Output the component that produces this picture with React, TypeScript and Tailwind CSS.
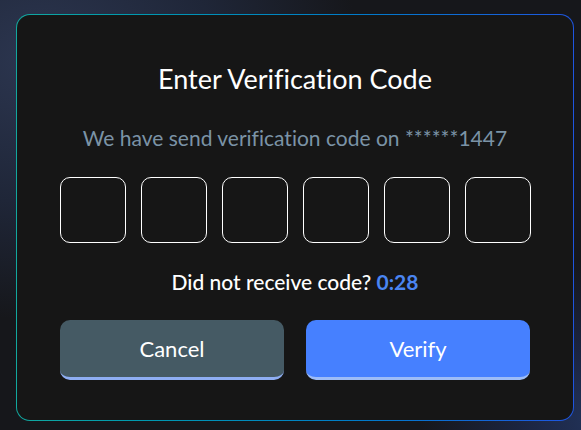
export default function App() {
  return (
    <div
      className="relative h-[430px] w-[581px] overflow-hidden bg-[#16171b] [font-variant-ligatures:none]"
      style={{ fontFamily: 'Lato, "Open Sans", sans-serif' }}
    >
      {/* background glows */}
      <div className="absolute inset-0 bg-[radial-gradient(ellipse_320px_260px_at_40px_60px,#2c3650_0%,#1f2638_55%,transparent_100%)]" />
      <div className="absolute inset-0 bg-[radial-gradient(ellipse_180px_160px_at_600px_420px,#22335a_0%,#1b2440_45%,transparent_100%)]" />

      <div className="relative ml-4 mt-[14px] w-[558px] rounded-[14px] bg-gradient-to-r from-[#12a89f] to-[#1e55e0] p-px">
        <div className="flex h-[405px] flex-col items-center rounded-[13px] bg-[#161616] px-[43px] pt-[48px]">
          <h1 className="text-[27px] leading-8 text-white">Enter Verification Code</h1>
          <p className="mt-[29px] text-[21px] leading-7 text-[#7b93a6]">
            We have send verification code on ******1447
          </p>

          <div className="mt-[25px] flex gap-[15px]">
            {[0, 1, 2, 3, 4, 5].map((i) => (
              <input
                key={i}
                maxLength={1}
                className="h-[66px] w-[66px] rounded-[10px] border border-white bg-transparent text-center text-2xl text-white outline-none"
              />
            ))}
          </div>

          <p className="mt-[25px] text-[21px] font-medium leading-7 text-white">
            Did not receive code? <span className="font-bold text-[#4a85f2]">0:28</span>
          </p>

          <div className="mt-[24px] flex w-full gap-[22px]">
            <button className="h-[60px] flex-1 rounded-[10px] border-b-[3px] border-[#8eaef3] bg-[#455a64] text-[22px] text-white">
              Cancel
            </button>
            <button className="h-[60px] flex-1 rounded-[10px] border-b-[3px] border-[#9dbcf7] bg-[#4680ff] text-[22px] text-white">
              Verify
            </button>
          </div>
        </div>
      </div>
    </div>
  );
}
